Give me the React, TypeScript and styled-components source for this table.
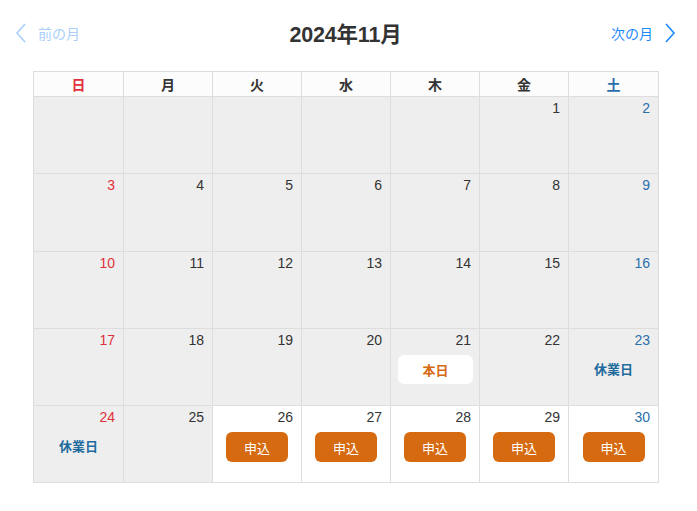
import React from "react";
import styled, { createGlobalStyle } from "styled-components";

const Global = createGlobalStyle`
  html, body { margin: 0; padding: 0; background: #fff; }
  body { font-family: "Liberation Sans", Arial, "Noto Sans CJK JP", sans-serif; color: #333; }
`;

const Page = styled.div`
  width: 697px;
  height: 511px;
  box-sizing: border-box;
  padding-top: 18px;
`;

const Header = styled.div`
  display: flex;
  align-items: center;
  justify-content: space-between;
  height: 30px;
  padding: 0 21px 0 15px;
`;

const NavLink = styled.a<{ $disabled?: boolean }>`
  display: flex;
  align-items: center;
  gap: 11px;
  font-size: 14px;
  color: ${(p) => (p.$disabled ? "#a9cffa" : "#1a8aff")};
  text-decoration: none;
  cursor: ${(p) => (p.$disabled ? "default" : "pointer")};
`;

const Title = styled.h1`
  margin: 0 0 2px 0;
  font-size: 21.5px;
  font-weight: bold;
  color: #333;
  letter-spacing: -0.2px;
`;

const Table = styled.table`
  margin: 23px 0 0 33px;
  width: 626px;
  border-collapse: collapse;
  table-layout: fixed;
`;

const Th = styled.th<{ $color: string }>`
  height: 24px;
  border: 1px solid #dddddd;
  background: #fcfcfc;
  font-size: 14px;
  font-weight: bold;
  color: ${(p) => p.$color};
  padding: 0;
  text-align: center;
  vertical-align: middle;
`;

const Td = styled.td<{ $active: boolean }>`
  height: 76.3px;
  border: 1px solid #dddddd;
  background: ${(p) => (p.$active ? "#ffffff" : "#eeeeee")};
  padding: 0;
  vertical-align: top;
`;

const DayNum = styled.div<{ $color: string }>`
  text-align: right;
  font-size: 14px;
  line-height: 16px;
  padding: 3px 8px 0 0;
  color: ${(p) => p.$color};
`;

const Slot = styled.div`
  display: flex;
  justify-content: center;
  margin-top: 7px;
  height: 30px;
  align-items: center;
`;

const ApplyButton = styled.button`
  width: 62px;
  height: 30px;
  border: none;
  border-radius: 6px;
  background: #d66a10;
  color: #fff;
  font-family: "Liberation Sans", Arial, "Noto Sans CJK JP", sans-serif;
  font-size: 13px;
  padding: 0;
  cursor: pointer;
`;

const TodayBadge = styled.div`
  width: 75px;
  height: 29px;
  margin-left: 1px;
  border-radius: 6px;
  background: #fff;
  color: #d66a10;
  font-weight: bold;
  font-size: 13px;
  display: flex;
  align-items: center;
  justify-content: center;
`;

const Holiday = styled.div`
  color: #1f6b9e;
  font-weight: bold;
  font-size: 13px;
  margin-bottom: 3px;
`;

const Chevron = ({ dir }: { dir: "left" | "right" }) => (
  <svg width="12" height="20" viewBox="0 0 12 20" fill="none" stroke="currentColor" strokeWidth="1.6">
    {dir === "left" ? <path d="M10 1 L2 10 L10 19" /> : <path d="M2 1 L10 10 L2 19" />}
  </svg>
);

type Cell = { day: number | null; kind?: "apply" | "today" | "holiday" };

const weeks: Cell[][] = [
  [{ day: null }, { day: null }, { day: null }, { day: null }, { day: null }, { day: 1 }, { day: 2 }],
  [3, 4, 5, 6, 7, 8, 9].map((d) => ({ day: d })),
  [10, 11, 12, 13, 14, 15, 16].map((d) => ({ day: d })),
  [{ day: 17 }, { day: 18 }, { day: 19 }, { day: 20 }, { day: 21, kind: "today" }, { day: 22 }, { day: 23, kind: "holiday" }],
  [{ day: 24, kind: "holiday" }, { day: 25 }, { day: 26, kind: "apply" }, { day: 27, kind: "apply" }, { day: 28, kind: "apply" }, { day: 29, kind: "apply" }, { day: 30, kind: "apply" }],
];

const headers = ["日", "月", "火", "水", "木", "金", "土"];
const headColor = (i: number) => (i === 0 ? "#e0303a" : i === 6 ? "#2a6faa" : "#333333");
const numColor = (i: number) => (i === 0 ? "#e0303a" : i === 6 ? "#2a6faa" : "#333333");
const widths = [90, 89, 89, 89, 89, 89, 90];

export default function App() {
  return (
    <Page>
      <Global />
      <Header>
        <NavLink $disabled>
          <Chevron dir="left" />
          前の月
        </NavLink>
        <Title>2024年11月</Title>
        <NavLink>
          次の月
          <Chevron dir="right" />
        </NavLink>
      </Header>
      <Table>
        <colgroup>
          {widths.map((w, i) => (
            <col key={i} style={{ width: w }} />
          ))}
        </colgroup>
        <thead>
          <tr>
            {headers.map((h, i) => (
              <Th key={h} $color={headColor(i)}>
                {h}
              </Th>
            ))}
          </tr>
        </thead>
        <tbody>
          {weeks.map((w, wi) => (
            <tr key={wi}>
              {w.map((c, i) => (
                <Td key={i} $active={c.kind === "apply"}>
                  {c.day !== null && <DayNum $color={numColor(i)}>{c.day}</DayNum>}
                  {c.kind && (
                    <Slot>
                      {c.kind === "apply" && <ApplyButton>申込</ApplyButton>}
                      {c.kind === "today" && <TodayBadge>本日</TodayBadge>}
                      {c.kind === "holiday" && <Holiday>休業日</Holiday>}
                    </Slot>
                  )}
                </Td>
              ))}
            </tr>
          ))}
        </tbody>
      </Table>
    </Page>
  );
}
